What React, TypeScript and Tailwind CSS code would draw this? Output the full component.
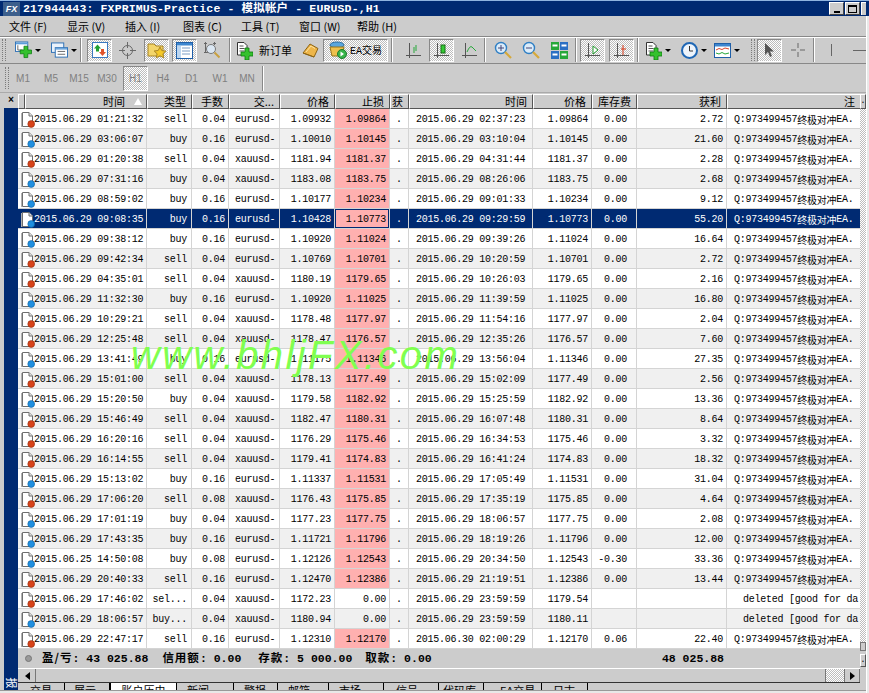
import React from "react";

const mono = "font-['Liberation_Mono','Noto_Sans_CJK_SC',monospace]";
const checker = "bg-[repeating-conic-gradient(#ffffff_0_25%,#bdbdbd_0_50%)] bg-[length:2px_2px]";

type R = [string, string, string, string, string, string, string, string, string, string];
const D = "2015.06.29 ";
const rows: R[] = [
  [D + "01:21:32", "sell", "0.04", "eurusd-", "1.09932", "1.09864", D + "02:37:23", "1.09864", "0.00", "2.72"],
  [D + "03:06:07", "buy", "0.16", "eurusd-", "1.10010", "1.10145", D + "03:10:04", "1.10145", "0.00", "21.60"],
  [D + "01:20:38", "sell", "0.04", "xauusd-", "1181.94", "1181.37", D + "04:31:44", "1181.37", "0.00", "2.28"],
  [D + "07:31:16", "buy", "0.04", "xauusd-", "1183.08", "1183.75", D + "08:26:06", "1183.75", "0.00", "2.68"],
  [D + "08:59:02", "buy", "0.16", "eurusd-", "1.10177", "1.10234", D + "09:01:33", "1.10234", "0.00", "9.12"],
  [D + "09:08:35", "buy", "0.16", "eurusd-", "1.10428", "1.10773", D + "09:29:59", "1.10773", "0.00", "55.20"],
  [D + "09:38:12", "buy", "0.16", "eurusd-", "1.10920", "1.11024", D + "09:39:26", "1.11024", "0.00", "16.64"],
  [D + "09:42:34", "sell", "0.04", "eurusd-", "1.10769", "1.10701", D + "10:20:59", "1.10701", "0.00", "2.72"],
  [D + "04:35:01", "sell", "0.04", "xauusd-", "1180.19", "1179.65", D + "10:26:03", "1179.65", "0.00", "2.16"],
  [D + "11:32:30", "buy", "0.16", "eurusd-", "1.10920", "1.11025", D + "11:39:59", "1.11025", "0.00", "16.80"],
  [D + "10:29:21", "sell", "0.04", "xauusd-", "1178.48", "1177.97", D + "11:54:16", "1177.97", "0.00", "2.04"],
  [D + "12:25:48", "sell", "0.04", "xauusd-", "1178.47", "1176.57", D + "12:35:26", "1176.57", "0.00", "7.60"],
  [D + "13:41:49", "buy", "0.16", "eurusd-", "1.11175", "1.11346", D + "13:56:04", "1.11346", "0.00", "27.35"],
  [D + "15:01:00", "sell", "0.04", "xauusd-", "1178.13", "1177.49", D + "15:02:09", "1177.49", "0.00", "2.56"],
  [D + "15:20:50", "buy", "0.04", "xauusd-", "1179.58", "1182.92", D + "15:25:59", "1182.92", "0.00", "13.36"],
  [D + "15:46:49", "sell", "0.04", "xauusd-", "1182.47", "1180.31", D + "16:07:48", "1180.31", "0.00", "8.64"],
  [D + "16:20:16", "sell", "0.04", "xauusd-", "1176.29", "1175.46", D + "16:34:53", "1175.46", "0.00", "3.32"],
  [D + "16:14:55", "sell", "0.04", "xauusd-", "1179.41", "1174.83", D + "16:41:24", "1174.83", "0.00", "18.32"],
  [D + "15:13:02", "buy", "0.16", "eurusd-", "1.11337", "1.11531", D + "17:05:49", "1.11531", "0.00", "31.04"],
  [D + "17:06:20", "sell", "0.08", "xauusd-", "1176.43", "1175.85", D + "17:35:19", "1175.85", "0.00", "4.64"],
  [D + "17:01:19", "buy", "0.04", "xauusd-", "1177.23", "1177.75", D + "18:06:57", "1177.75", "0.00", "2.08"],
  [D + "17:43:35", "buy", "0.16", "eurusd-", "1.11721", "1.11796", D + "18:19:26", "1.11796", "0.00", "12.00"],
  ["2015.06.25 14:50:08", "buy", "0.08", "eurusd-", "1.12126", "1.12543", D + "20:34:50", "1.12543", "-0.30", "33.36"],
  [D + "20:40:33", "sell", "0.16", "eurusd-", "1.12470", "1.12386", D + "21:19:51", "1.12386", "0.00", "13.44"],
  [D + "17:46:02", "sel...", "0.04", "xauusd-", "1172.23", "0.00", D + "23:59:59", "1179.54", "", ""],
  [D + "18:06:57", "buy...", "0.04", "xauusd-", "1180.94", "0.00", D + "23:59:59", "1180.11", "", ""],
  [D + "22:47:17", "sell", "0.16", "eurusd-", "1.12310", "1.12170", "2015.06.30 02:00:29", "1.12170", "0.06", "22.40"],
];

function RowIcon({ buy }: { buy: boolean }) {
  return (
    <svg width="14" height="17" viewBox="0 0 14 17" className="shrink-0">
      <path d="M1.5 1.5H8L11.5 5V15.5H1.5Z" fill="#fff" stroke="#6e6e6e" />
      <path d="M0.5 2V16" stroke="#b0b0b0" />
      <path d="M8 1.5V5H11.5" fill="#e4e4e4" stroke="#6e6e6e" />
      <circle cx="10.2" cy="13" r="3.4" fill={buy ? "#1f8fe0" : "#d8431a"} stroke={buy ? "#0f5f9e" : "#8e2a0c"} strokeWidth="0.6" />
    </svg>
  );
}

function Cell({ w, children, right, cls = "" }: { w: string; children?: React.ReactNode; right?: boolean; cls?: string }) {
  return (
    <div className={`${w} h-full pt-[2px] shrink-0 flex items-center overflow-hidden whitespace-nowrap border-r border-[#d4d4d4] ${right ? "justify-end pr-[3px]" : ""} ${cls}`}>
      {children}
    </div>
  );
}

function Head({ w, children, cls = "" }: { w: string; children?: React.ReactNode; cls?: string }) {
  return (
    <div className={`${w} h-[15px] shrink-0 flex items-center justify-end pr-[5px] overflow-hidden whitespace-nowrap bg-[#cccccc] border-t border-l border-white border-r border-b border-r-[#555] border-b-[#555] text-[11px] text-black ${cls}`}>
      {children}
    </div>
  );
}

function Active({ w, children }: { w: string; children: React.ReactNode }) {
  return (
    <div className={`${w} h-[23px] shrink-0 flex items-center justify-center border-t border-l border-[#888] border-r border-b border-r-white border-b-white ${checker}`}>
      {children}
    </div>
  );
}

function Slot({ w, children }: { w: string; children: React.ReactNode }) {
  return <div className={`${w} h-[23px] shrink-0 flex items-center justify-center`}>{children}</div>;
}

const Sep = () => <div className="w-[2px] h-[24px] shrink-0 mx-[3px] border-l border-[#888] border-r border-r-white" />;
const Grip = () => <div className="w-[4px] h-[22px] shrink-0 border-l border-r border-dotted border-[#7a7a7a]" />;
const Caret = () => <span className="ml-[3px] w-0 h-0 border-l-[3px] border-r-[3px] border-t-[3px] border-l-transparent border-r-transparent border-t-black" />;

const Plus = ({ x, y }: { x: number; y: number }) => (
  <path d={`M${x - 2} ${y - 6}h4v4h4v4h-4v4h-4v-4h-4v-4h4z`} fill="#35c12e" stroke="#0c7a10" strokeWidth="0.8" />
);

const NewChart = () => (
  <svg width="18" height="18" viewBox="0 0 18 18">
    <rect x="0.5" y="0.5" width="13" height="10" fill="#fff" stroke="#2b6fb5" />
    <rect x="1" y="1" width="12" height="2" fill="#5b9bd8" />
    <path d="M3 4v5h5" stroke="#666" fill="none" />
    <Plus x={11.5} y={11} />
  </svg>
);
const Profiles = () => (
  <svg width="18" height="17" viewBox="0 0 18 17">
    <rect x="0.5" y="0.5" width="13" height="10" fill="#eaf2fb" stroke="#2b6fb5" />
    <rect x="4.5" y="5.5" width="13" height="10" fill="#fff" stroke="#2b6fb5" />
    <rect x="5" y="6" width="12" height="1.5" fill="#5b9bd8" />
    <path d="M7 9.5h8M7 12.5h8" stroke="#666" />
  </svg>
);
const MarketWatch = () => (
  <svg width="16" height="16" viewBox="0 0 16 16">
    <rect x="0.5" y="0.5" width="15" height="15" fill="#fff" stroke="#3a78c0" />
    <path d="M5.5 2.5 9 6.5H7V9.5H4V6.5H2Z" fill="#20a030" />
    <path d="M10.5 14 7 10h2V7h3v3h2Z" fill="#e0522a" />
  </svg>
);
const Cross = () => (
  <svg width="17" height="17" viewBox="0 0 17 17" fill="none" stroke="#6a6a6a">
    <circle cx="8.5" cy="8.5" r="5" />
    <path d="M8.5 0v6M8.5 11v6M0 8.5h6M11 8.5h6" />
  </svg>
);
const FolderStar = () => (
  <svg width="20" height="18" viewBox="0 0 20 18">
    <path d="M1 3h6l2 2h7v10H1Z" fill="#f3d56b" stroke="#a88424" />
    <path d="M13 6l1.8 3.6 4 .5-2.9 2.7.8 4-3.7-2-3.7 2 .8-4L7.2 10l4-.5Z" fill="#f5c92a" stroke="#a88424" />
  </svg>
);
const Nav = () => (
  <svg width="17" height="17" viewBox="0 0 17 17">
    <rect x="0.5" y="0.5" width="16" height="16" fill="#fff" stroke="#1f5fa8" />
    <rect x="1" y="1" width="15" height="2.5" fill="#3d86cf" />
    <rect x="1" y="4" width="4" height="12" fill="#bcd6f0" />
    <path d="M6 6h8M6 9h8M6 12h8" stroke="#7a9cc4" />
  </svg>
);
const Tester = () => (
  <svg width="18" height="18" viewBox="0 0 18 18" fill="none">
    <path d="M2.5 1v11M11.5 1v3M1 2.5h3M10 2.5h3M1 11.5h4" stroke="#666" />
    <circle cx="8" cy="8" r="4.5" fill="#dbe7f3" stroke="#777" />
    <path d="M11.5 11.5l5 5" stroke="#c8a040" strokeWidth="2" />
  </svg>
);
const NewOrder = () => (
  <svg width="17" height="19" viewBox="0 0 17 19">
    <path d="M1.5 1.5H8L11 4.5V14H1.5Z" fill="#fff" stroke="#333" />
    <path d="M3.5 5h4M3.5 7.5h5M3.5 10h5" stroke="#555" />
    <Plus x={11} y={13} />
  </svg>
);
const Tag = () => (
  <svg width="17" height="17" viewBox="0 0 17 17">
    <path d="M1 11 8 2l8 4.5-4 8.5Z" fill="#eeb64a" stroke="#8d6414" />
    <path d="M1 11l11 4" stroke="#8d6414" />
    <path d="M4 10 9 4l4 2.5" stroke="#ffe3a0" fill="none" />
  </svg>
);
const EA = () => (
  <svg width="18" height="18" viewBox="0 0 18 18">
    <ellipse cx="8" cy="4" rx="7" ry="3" fill="#5aa6dc" stroke="#2a6da3" />
    <path d="M1 6h14l-2 9H3Z" fill="#eec04c" stroke="#96741b" />
    <circle cx="13" cy="13" r="4.5" fill="#37b54a" stroke="#1a7a2a" />
    <path d="M11.5 10.5l3.5 2.5-3.5 2.5Z" fill="#fff" />
  </svg>
);
const Axes = ({ children }: { children?: React.ReactNode }) => (
  <svg width="17" height="17" viewBox="0 0 17 17" fill="none">
    <path d="M4.5 1v15M1 13.5h15" stroke="#555" />
    {children}
  </svg>
);
const Mag = ({ minus }: { minus?: boolean }) => (
  <svg width="18" height="18" viewBox="0 0 18 18" fill="none">
    <circle cx="7" cy="7" r="5.5" fill="#dcecf9" stroke="#2f7fc4" strokeWidth="1.4" />
    <path d="M4 7h6" stroke="#447" />
    {!minus && <path d="M7 4v6" stroke="#447" />}
    <path d="M11 11l6 6" stroke="#d6a93a" strokeWidth="2.2" />
  </svg>
);
const Tile = () => (
  <svg width="17" height="17" viewBox="0 0 17 17">
    <rect x="0" y="0" width="8" height="8" fill="#27a83a" />
    <rect x="9" y="0" width="8" height="8" fill="#2b6fc4" />
    <rect x="0" y="9" width="8" height="8" fill="#2b6fc4" />
    <rect x="9" y="9" width="8" height="8" fill="#27a83a" />
    <path d="M1.5 3.5h5M10.5 3.5h5M1.5 12.5h5M10.5 12.5h5" stroke="#fff" strokeWidth="2" />
  </svg>
);
const Clock = () => (
  <svg width="17" height="17" viewBox="0 0 17 17" fill="none">
    <circle cx="8.5" cy="8.5" r="7.5" fill="#eef4fb" stroke="#1f67b5" strokeWidth="2" />
    <path d="M8.5 4v5h3.5" stroke="#333" />
  </svg>
);
const Ind = () => (
  <svg width="17" height="17" viewBox="0 0 17 17" fill="none">
    <rect x="0.5" y="1.5" width="16" height="14" fill="#fff" stroke="#1f5fa8" />
    <rect x="1" y="2" width="15" height="2.5" fill="#3d86cf" />
    <path d="M2 8l3-1.5 3 1 3-1.5 4 1" stroke="#d8432a" />
    <path d="M2 11l3 1 3-1.5 3 1.5 4-1" stroke="#27a83a" />
  </svg>
);
const Arrow = () => (
  <svg width="12" height="16" viewBox="0 0 12 16">
    <path d="M1 1v12l3-3 2 5 2-1-2-4.5h4Z" fill="#555" />
  </svg>
);

const timeframes: [string, string][] = [
  ["M1", "w-[28px]"], ["M5", "w-[28px]"], ["M15", "w-[28px]"], ["M30", "w-[28px]"],
];
const timeframes2: [string, string][] = [
  ["H4", "w-[28px]"], ["D1", "w-[29px]"], ["W1", "w-[28px]"], ["MN", "w-[26px]"],
];

const tabs: [string, string][] = [
  ["交易", "w-[47px] pl-[12px]"],
  ["展示", "w-[45px] pl-[9px]"],
  ["新闻", "w-[57px] pl-[10px]"],
  ["警报", "w-[44px] pl-[10px]"],
  ["邮箱", "w-[51px] pl-[10px]"],
  ["市场", "w-[55px] pl-[10px]"],
  ["信号", "w-[55px] pl-[12px]"],
  ["代码库", "w-[45px] pl-[4px]"],
  ["EA交易", "w-[58px] pl-[16px]"],
  ["日志", "w-[46px] pl-[11px]"],
];

const CJK = ({ children }: { children: React.ReactNode }) => <span className="font-['Noto_Sans_CJK_SC',sans-serif]">{children}</span>;
const CJKW = ({ children }: { children: React.ReactNode }) => <span className="font-['Noto_Sans_CJK_SC',sans-serif] tracking-[1px]">{children}</span>;

const BarBtn = ({ children }: { children?: React.ReactNode }) => (
  <div className="w-[15px] h-[13px] bg-[#cccccc] border-t border-l border-white border-b border-r border-b-[#444] border-r-[#444] flex items-center justify-center">{children}</div>
);

export default function App() {
  return (
    <div className={`w-[869px] h-[693px] overflow-hidden bg-[#cccccc] flex flex-col relative ${mono}`}>
      {/* title */}
      <div className="h-[16px] shrink-0 flex items-center bg-[#002a72] border-t border-[#8fb4e0] pl-[3px] text-white">
        <div className="w-[17px] h-[14px] shrink-0 bg-[#3c5f8c] text-[9px] leading-[14px] font-bold italic text-center text-white font-['Liberation_Sans',sans-serif]">FX</div>
        <span className="ml-[3px] text-[11.5px] font-bold tracking-[0.15px] whitespace-nowrap">
          217944443: FXPRIMUS-Practice - <CJK>模拟帐户</CJK> - EURUSD-,H1
        </span>
        <div className="ml-auto flex gap-[1px] pr-[3px]">
          <BarBtn><div className="w-[6px] h-[2px] bg-black mt-[6px]" /></BarBtn>
          <BarBtn><div className="w-[9px] h-[8px] border border-black border-t-2" /></BarBtn>
          <div className="w-[5px] h-[13px] bg-[#cccccc] border-t border-l border-white" />
        </div>
      </div>

      <div className="flex-1 min-h-0 flex">
        <div className="w-[866px] shrink-0 flex flex-col">
          {/* menu */}
          <div className="h-[20px] shrink-0 flex items-center pl-[9px] gap-[15px] text-[11px] font-['Noto_Sans_CJK_SC',sans-serif] text-black">
            {["文件 (F)", "显示 (V)", "插入 (I)", "图表 (C)", "工具 (T)", "窗口 (W)", "帮助 (H)"].map((m) => (
              <span key={m} className="whitespace-nowrap w-[43px]">{m}</span>
            ))}
          </div>

          {/* main toolbar */}
          <div className="h-[28px] shrink-0 flex items-center pl-[2px] border-t border-[#888] border-b border-b-[#888] shadow-[inset_0_1px_0_#fff] overflow-hidden">
            <Grip />
            <Slot w="w-[26px] ml-[9px]"><NewChart /><Caret /></Slot>
            <Slot w="w-[26px] ml-[10px]"><Profiles /><Caret /></Slot>
            <Sep />
            <Active w="w-[25px] ml-[2px]"><MarketWatch /></Active>
            <Slot w="w-[28px] ml-[1px]"><Cross /></Slot>
            <Active w="w-[25px] ml-[3px]"><FolderStar /></Active>
            <Active w="w-[25px] ml-[3px]"><Nav /></Active>
            <Slot w="w-[28px] ml-[1px]"><Tester /></Slot>
            <Sep />
            <Slot w="w-[20px]"><NewOrder /></Slot>
            <span className="ml-[5px] w-[38px] shrink-0 text-[11px] font-['Noto_Sans_CJK_SC',sans-serif] whitespace-nowrap">新订单</span>
            <Slot w="w-[20px] ml-[3px]"><Tag /></Slot>
            <div className={`ml-[3px] w-[65px] h-[23px] shrink-0 flex items-center justify-center gap-[3px] border-t border-l border-[#888] border-r border-b border-r-white border-b-white ${checker}`}>
              <EA /><span className="text-[10px] whitespace-nowrap">EA<CJK>交易</CJK></span>
            </div>
            <Sep />
            <Slot w="w-[24px] ml-[5px]"><Axes><path d="M9 5v6M11 3v6" stroke="#27a83a" /></Axes></Slot>
            <Active w="w-[25px] ml-[4px]"><Axes><rect x="8" y="3" width="4" height="8" fill="#33cc33" stroke="#186a18" /></Axes></Active>
            <Slot w="w-[24px] ml-[3px]"><Axes><path d="M6 10q3-7 5-5t4 4" stroke="#27a83a" /></Axes></Slot>
            <Sep />
            <Slot w="w-[26px] ml-[1px]"><Mag /></Slot>
            <Slot w="w-[26px] ml-[2px]"><Mag minus /></Slot>
            <Slot w="w-[26px] ml-[2px]"><Tile /></Slot>
            <Sep />
            <Active w="w-[25px]"><Axes><path d="M9 4l5 4-5 4Z" fill="#fff" stroke="#1f9a2a" /></Axes></Active>
            <Active w="w-[25px] ml-[4px]"><Axes><path d="M10 3v10M8 7h5" stroke="#d83a1a" /></Axes></Active>
            <Sep />
            <Slot w="w-[26px] ml-[3px]"><NewOrder /><Caret /></Slot>
            <Slot w="w-[26px] ml-[10px]"><Clock /><Caret /></Slot>
            <Slot w="w-[26px] ml-[7px]"><Ind /><Caret /></Slot>
            <div className="ml-[11px]"><Grip /></div>
            <div className="ml-[2px]"><Active w="w-[25px]"><Arrow /></Active></div>
            <Slot w="w-[24px] ml-[4px]"><svg width="16" height="16" fill="none" stroke="#666"><path d="M8 1v5M8 10v5M1 8h5M10 8h5" /></svg></Slot>
            <Sep />
            <Slot w="w-[24px] ml-[1px]"><div className="w-px h-[12px] bg-[#666]" /></Slot>
            <Slot w="w-[13px] ml-[10px]"><div className="w-[13px] h-px bg-[#666]" /></Slot>
          </div>

          {/* timeframes */}
          <div className="h-[29px] shrink-0 flex items-center pl-[5px] border-b border-[#aaa] text-[10px] font-['Liberation_Sans',sans-serif] text-[#808080]">
            <Grip />
            <div className="flex items-center text-center">
              {timeframes.map(([t, w]) => <span key={t} className={w}>{t}</span>)}
              <div className={`w-[25px] h-[25px] ml-[2px] flex items-center justify-center border-t border-l border-[#888] border-r border-b border-r-white border-b-white ${checker}`}>H1</div>
              <div className="w-[1px]" />
              {timeframes2.map(([t, w]) => <span key={t} className={w}>{t}</span>)}
              <div className="w-[2px] h-[25px] ml-[2px] border-l border-[#888] border-r border-r-white" />
            </div>
          </div>

          {/* body */}
          <div className="flex-1 min-h-0 flex pl-[4px]">
            <div className="w-[14px] shrink-0 flex flex-col">
              <div className="h-[15px] shrink-0 flex items-center justify-center text-[10px] font-bold leading-[12px]">×</div>
              <div className="flex-1 bg-[#002a72] flex items-end justify-center text-white text-[11px] leading-[14px] font-['Noto_Sans_CJK_SC',sans-serif]">
                <span className="rotate-90">报</span>
              </div>
            </div>
            <div className="w-[842px] shrink-0 flex flex-col pt-[1px]">
              {/* header */}
              <div className="h-[15px] shrink-0 flex items-center font-['Noto_Sans_CJK_SC',sans-serif]">
                <Head w="w-[7px]" />
                <Head w="w-[122px]" cls="relative">
                  <span className="mr-[16px]">时间</span>
                  <span className="absolute right-[4px] top-[3px] w-0 h-0 border-l-[4px] border-r-[4px] border-b-[7px] border-l-transparent border-r-transparent border-b-white" />
                </Head>
                <Head w="w-[45px]">类型</Head>
                <Head w="w-[37px]">手数</Head>
                <Head w="w-[51px]">交...</Head>
                <Head w="w-[55px]">价格</Head>
                <Head w="w-[55px]">止损</Head>
                <Head w="w-[19px]" cls="pr-[1px]">获</Head>
                <Head w="w-[124px]">时间</Head>
                <Head w="w-[59px]">价格</Head>
                <Head w="w-[45px]" cls="pr-[3px]">库存费</Head>
                <Head w="w-[90px]">获利</Head>
                <Head w="w-[134px]">注</Head>
              </div>
              {/* rows */}
              <div className="text-[10px] tracking-[-0.25px] text-black">
                {rows.map((r, i) => {
                  const selected = i === 5;
                  const bg = selected ? "bg-[#002a72] text-white" : i % 2 === 1 ? "bg-[#f0f0f0]" : "bg-white";
                  const buy = r[1].startsWith("buy");
                  const hasStop = r[5] !== "0.00";
                  const deleted = r[9] === "";
                  return (
                    <div key={i} className={`h-[20px] flex border-b border-[#d4d4d4] ${bg}`}>
                      <Cell w="w-[129px]" cls="pl-[3px]">
                        <RowIcon buy={buy} />
                        <span className="relative ml-[-1px]">{r[0]}</span>
                      </Cell>
                      <Cell w="w-[45px]" right cls="pr-[4px]">{r[1]}</Cell>
                      <Cell w="w-[37px]" right>{r[2]}</Cell>
                      <Cell w="w-[51px]" cls="pl-[6px]">{r[3]}</Cell>
                      <Cell w="w-[55px]" right>{r[4]}</Cell>
                      <Cell w="w-[55px]" right cls="relative">
                        {hasStop && <div className={`absolute inset-0 bg-[#ffb0b0] ${selected ? "border border-[#002a72]" : ""}`} />}
                        <span className={`relative ${selected ? "text-black" : ""}`}>{r[5]}</span>
                      </Cell>
                      <Cell w="w-[19px]" cls="justify-center">.</Cell>
                      <Cell w="w-[124px]" cls="pl-[7px]">{r[6]}</Cell>
                      <Cell w="w-[59px]" right>{r[7]}</Cell>
                      <Cell w="w-[45px]" right cls="pr-[9px]">{r[8]}</Cell>
                      <Cell w="w-[90px]" right>{r[9]}</Cell>
                      <div className="w-[134px] shrink-0 h-full pt-[2px] overflow-hidden whitespace-nowrap flex items-center pl-[7px]">
                        {deleted ? <span className="pl-[9px]">deleted [good for da</span> : <>Q:973499457<span className="font-['Noto_Sans_CJK_SC',sans-serif]">终极对冲</span>EA.</>}
                      </div>
                    </div>
                  );
                })}
              </div>
              {/* status */}
              <div className="h-[19px] shrink-0 flex items-center text-[11.5px] font-bold whitespace-nowrap pl-[7px] relative">
                <span className="w-[7px] h-[7px] rounded-full bg-[#999] border border-[#777]" />
                <span className="ml-[10px]"><CJKW>盈/亏</CJKW>: 43 025.88</span>
                <span className="ml-[14px]"><CJKW>信用额</CJKW>: 0.00</span>
                <span className="ml-[17px]"><CJKW>存款</CJKW>: 5 000.00</span>
                <span className="ml-[13px]"><CJKW>取款</CJKW>: 0.00</span>
                <span className="absolute right-[136px]">48 025.88</span>
              </div>
              {/* hscroll */}
              <div className="h-[15px] shrink-0 flex items-stretch pl-[2px] border-t border-white border-b border-b-[#333]">
                <div className="w-[16px] flex items-center justify-center border-r border-[#777]"><span className="w-0 h-0 border-y-[4px] border-r-[5px] border-y-transparent border-r-black" /></div>
                <div className="flex-1 border-r border-[#777]" />
                <div className={`w-[18px] ${checker}`} />
                <div className="w-[16px] flex items-center justify-center border-x border-[#777]"><span className="w-0 h-0 border-y-[4px] border-l-[5px] border-y-transparent border-l-black" /></div>
              </div>
              {/* tabs */}
              <div className="flex-1 flex items-start text-[11px] font-['Noto_Sans_CJK_SC',sans-serif] overflow-hidden leading-[14px] text-black">
                <div className="flex">
                  {tabs.slice(0, 2).map(([t, w]) => (
                    <div key={t} className={`${w} h-[14px] border-r border-black whitespace-nowrap`}>{t}</div>
                  ))}
                </div>
                <div className="w-[67px] h-[14px] bg-white border-x border-black text-center shrink-0">账户历史</div>
                <div className="flex">
                  {tabs.slice(2).map(([t, w]) => (
                    <div key={t} className={`${w} h-[14px] border-r border-black whitespace-nowrap`}>{t}</div>
                  ))}
                </div>
              </div>
            </div>
            {/* right scrollbar */}
            <div className="w-[6px] shrink-0 flex flex-col pt-[1px]">
              <div className="h-[15px] shrink-0 flex items-center justify-center border-t border-l border-white border-r border-b border-r-[#555] border-b-[#555] text-[9px] leading-none">.</div>
              <div className={`h-[533px] shrink-0 ${checker}`} />
              <div className="h-[9px] shrink-0 border border-[#777] bg-[#cccccc]" />
              <div className="h-[3px] shrink-0" />
              <div className="h-[13px] shrink-0 flex items-center justify-center border-t border-l border-white border-r border-b border-r-[#555] border-b-[#555] text-[9px] leading-none">.</div>
            </div>
          </div>
          <div className="h-[3px] shrink-0 bg-[#e8e8e8] border-t border-[#999]" />
        </div>
        {/* outer window edge */}
        <div className="w-[3px] shrink-0 bg-[#e8e8e8] border-l border-white" />
      </div>

      {/* watermark */}
      <div className="absolute left-[131px] top-[333px] text-[40px] leading-[44px] italic tracking-[2.4px] text-[#80ff50] font-['Liberation_Sans',sans-serif] whitespace-nowrap pointer-events-none">
        www.bhljFX.com
      </div>
    </div>
  );
}
